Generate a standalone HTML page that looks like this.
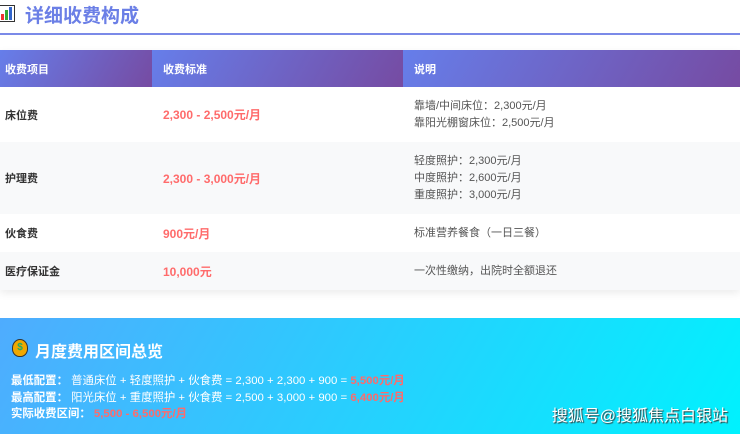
<!DOCTYPE html>
<html><head><meta charset="utf-8"><style>
*{margin:0;padding:0;box-sizing:border-box}
body{width:740px;height:434px;overflow:hidden;background:#fff;font-family:"Liberation Sans","Noto Sans CJK SC",sans-serif;font-size:11px;position:relative}
.title{position:absolute;left:0;top:0;height:35px;width:740px;border-bottom:2px solid #7b8ae8}
.title span{position:absolute;left:25px;top:1px;font-size:19px;font-weight:bold;color:#6b7fe6}
.icon{position:absolute;left:-2px;top:5px;width:17px;height:17px;border:1.5px solid #333;background:#fff}
.icon i{position:absolute;bottom:1px;width:3px}
table{position:absolute;top:50px;left:0;width:740px;border-collapse:collapse;box-shadow:0 3px 8px rgba(0,0,0,.08)}
th{height:37px;text-align:left;color:#fff;font-weight:bold;padding-left:5px;background:linear-gradient(120deg,#667eea,#764ba2)}
th:nth-child(2){padding-left:11px}th:nth-child(3){padding-left:11px}
td{padding-left:5px;color:#333}
td:nth-child(2){padding-left:11px;color:#ff6b6b;font-weight:bold;font-size:12px}
td:nth-child(3){padding-left:11px;color:#555;line-height:17px}
td:first-child{font-weight:bold}
tr.g td{background:#f8f9fa}
.sum{position:absolute;left:0;top:318px;width:740px;height:116px;background:linear-gradient(120deg,#4facfe,#00f2fe)}
.sum h3{position:absolute;left:35px;top:20px;font-size:16px;color:#fff}
.coin{position:absolute;left:12px;top:21px;width:16px;height:18px;border-radius:50% 50% 45% 45%;background:#f0a800;border:1.5px solid #333;color:#2a6;font-size:10px;text-align:center;line-height:16px;font-weight:bold}
.l{position:absolute;left:11px;color:#fff;font-size:11.4px}
.l b{font-weight:bold}.r{color:#ff6b6b;font-weight:bold}
.wm{position:absolute;right:12px;bottom:8px;color:#fff;font-size:16px;text-shadow:1px 1px 1px #333}
</style></head><body>
<div class="title"><div class="icon"><i style="left:2px;height:6px;background:#e33"></i><i style="left:6px;height:10px;background:#3a3"></i><i style="left:10px;height:13px;background:#36c"></i></div><span>详细收费构成</span></div>
<table>
<tr><th style="width:152px">收费项目</th><th style="width:251px">收费标准</th><th>说明</th></tr>
<tr style="height:55px"><td>床位费</td><td>2,300 - 2,500元/月</td><td>靠墙/中间床位：2,300元/月<br>靠阳光棚窗床位：2,500元/月</td></tr>
<tr class="g" style="height:72px"><td>护理费</td><td>2,300 - 3,000元/月</td><td>轻度照护：2,300元/月<br>中度照护：2,600元/月<br>重度照护：3,000元/月</td></tr>
<tr style="height:38px"><td>伙食费</td><td>900元/月</td><td>标准营养餐食（一日三餐）</td></tr>
<tr class="g" style="height:38px"><td>医疗保证金</td><td>10,000元</td><td>一次性缴纳，出院时全额退还</td></tr>
</table>
<div class="sum">
<div class="coin">$</div><h3>月度费用区间总览</h3>
<div class="l" style="top:54px"><b>最低配置：</b> 普通床位 + 轻度照护 + 伙食费 = 2,300 + 2,300 + 900 = <span class="r">5,500元/月</span></div>
<div class="l" style="top:71px"><b>最高配置：</b> 阳光床位 + 重度照护 + 伙食费 = 2,500 + 3,000 + 900 = <span class="r">6,400元/月</span></div>
<div class="l" style="top:87px"><b>实际收费区间：</b> <span class="r">5,500 - 6,500元/月</span></div>
<div class="wm">搜狐号@搜狐焦点白银站</div>
</div>
</body></html>
